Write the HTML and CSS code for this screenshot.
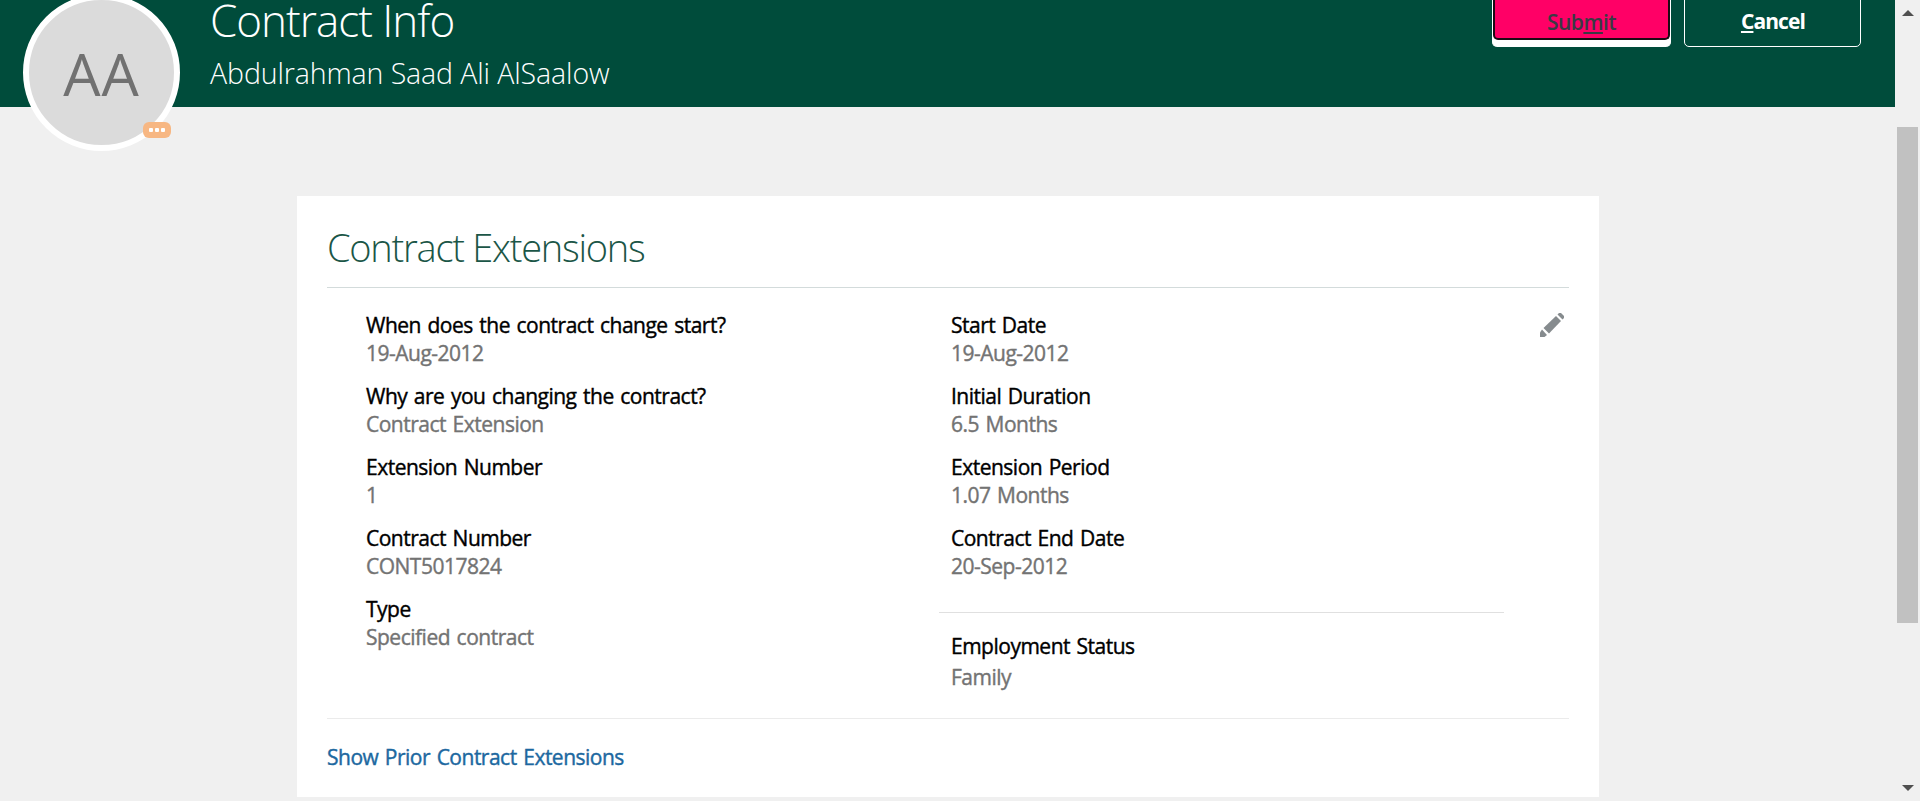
FILE: index.html
```html
<!DOCTYPE html>
<html lang="en">
<head>
<meta charset="utf-8">
<title>Contract Info</title>
<link rel="stylesheet" href="styles.css">
</head>
<body>
<div class="app">
  <div class="page">
    <header class="header">
      <div class="avatar"><span class="initials">AA</span>
        <svg class="badge" viewBox="0 0 28 16"><rect width="28" height="16" rx="6" fill="#f7b783"/><g fill="#fff"><rect x="6" y="6" width="4" height="4" rx="1"/><rect x="12" y="6" width="4" height="4" rx="1"/><rect x="18" y="6" width="4" height="4" rx="1"/></g></svg>
      </div>
      <div class="titles">
        <h1 class="title">Contract Info</h1>
        <p class="person">Abdulrahman Saad Ali AlSaalow</p>
      </div>
      <div class="actions">
        <button class="btn submit"><span class="face">Sub<u>m</u>it</span></button>
        <button class="btn cancel"><u>C</u>ancel</button>
      </div>
    </header>
    <main class="card">
      <h2 class="heading">Contract Extensions</h2>
      <section class="details">
        <dl class="column">
          <div class="field"><dt>When does the contract change start?</dt><dd>19-Aug-2012</dd></div>
          <div class="field"><dt>Why are you changing the contract?</dt><dd>Contract Extension</dd></div>
          <div class="field"><dt>Extension Number</dt><dd>1</dd></div>
          <div class="field"><dt>Contract Number</dt><dd>CONT5017824</dd></div>
          <div class="field"><dt>Type</dt><dd>Specified contract</dd></div>
        </dl>
        <div class="second">
          <dl class="column">
            <div class="field"><dt>Start Date</dt><dd>19-Aug-2012</dd></div>
            <div class="field"><dt>Initial Duration</dt><dd>6.5 Months</dd></div>
            <div class="field"><dt>Extension Period</dt><dd>1.07 Months</dd></div>
            <div class="field"><dt>Contract End Date</dt><dd>20-Sep-2012</dd></div>
          </dl>
          <dl class="column extra">
            <div class="field loose"><dt>Employment Status</dt><dd>Family</dd></div>
          </dl>
        </div>
        <svg class="pencil" viewBox="0 0 24 24" fill="#868b8e"><path d="M19 0h2l3 3v2l-1.500 1.500-5-5z"/><path d="M16 3l5 5L9 20.500l-5.500-5.500z"/><path d="M2 16.500l5 5.500L4.500 24H0v-4.500z"/></svg>
      </section>
      <footer class="foot"><a class="link">Show Prior Contract Extensions</a></footer>
    </main>
  </div>
  <div class="scrollbar">
    <svg class="arrow" viewBox="0 0 12 6"><path d="M0 6L6 0l6 6z" fill="#505050"/></svg>
    <div class="thumb"></div>
    <svg class="arrow" viewBox="0 0 12 6"><path d="M0 0l6 6 6-6z" fill="#505050"/></svg>
  </div>
</div>
</body>
</html>
```
FILE: styles.css
```css
* { box-sizing: border-box; }
html { height: 801px; overflow: hidden; }
body { margin: 0; height: 801px; background: #f0f0f0; font-family: "Open Sans", "Noto Sans", sans-serif; overflow: hidden; }
h1, h2, p, dl, dd { margin: 0; font-weight: inherit; }
.app { display: flex; height: 801px; overflow: hidden; }
.page { width: 1895px; }
.header { display: flex; align-items: flex-start; height: 107px; padding-left: 23px; padding-right: 34px; background: #004c3b; }
.avatar { position: relative; display: flex; justify-content: center; width: 157px; height: 157px; margin-top: -6px; border: 6px solid #fff; border-radius: 50%; background: #dbdbdb; color: #717171; }
.initials { font-size: 59px; line-height: 80px; margin-top: 33px; letter-spacing: 1px; }
.badge { position: absolute; left: 114px; top: 122px; width: 28px; height: 16px; }
.titles { flex: 1; padding-left: 30px; color: #fff; font-weight: 300; white-space: nowrap; }
.title { font-size: 44px; line-height: 40px; letter-spacing: -1px; }
.person { font-size: 28.500px; line-height: 40px; margin-top: 13px; letter-spacing: -.1px; }
.actions { display: flex; gap: 13px; }
.btn { height: 57px; margin-top: -10px; padding: 0; border-radius: 5px; font: 600 21px/28px "Open Sans", sans-serif; }
.btn u { text-decoration-thickness: 2px; text-underline-offset: 2px; text-decoration-skip-ink: none; }
.submit { width: 179px; border: 0 solid #fff; border-width: 0 1px; background: #fff; color: #3a3a44; }
.face { display: block; height: 50px; margin-bottom: 7px; padding-top: 18px; border: 2px solid #1b0a14; border-top: 0; border-radius: 5px; background: #ff0066; letter-spacing: -.5px; }
.cancel { width: 177px; padding: 5px 0 0 1px; border: 1px solid #fff; background: transparent; color: #fff; font-weight: 700; letter-spacing: -.9px; }
.card { width: 1302px; height: 601px; margin: 89px 0 0 297px; padding: 25px 30px 0; background: #fff; }
.heading { height: 67px; border-bottom: 1px solid #d3dbdb; color: #1b5647; font-size: 38px; font-weight: 300; line-height: 52px; letter-spacing: -1.25px; }
.details { display: flex; height: 431px; padding: 23px 5px 0 39px; border-bottom: 1px solid #ebebeb; font-size: 21px; line-height: 28px; letter-spacing: -.5px; word-spacing: 1.600px; -webkit-text-stroke: .4px; }
.column { display: flex; flex-direction: column; gap: 15px; width: 573px; }
dt { color: #000; }
dd { color: #737373; }
.second { width: 565px; }
.second .column { width: auto; padding-left: 12px; }
.second .extra { margin-top: 32px; padding-top: 19px; border-top: 1px solid #e0e0e0; }
.loose dt { margin-bottom: 3px; }
.pencil { width: 24px; height: 24px; margin: 2px 0 0 auto; }
.foot { padding-top: 24px; }
.link { color: #1c68a0; font-size: 21px; line-height: 28px; letter-spacing: -.5px; word-spacing: 1.600px; -webkit-text-stroke: .4px; }
.scrollbar { display: flex; flex-direction: column; align-items: center; width: 25px; padding: 10px 0; }
.arrow { width: 12px; height: 6px; }
.thumb { width: 21px; height: 496px; margin: 111px 0 auto; background: #c1c1c1; }
```
